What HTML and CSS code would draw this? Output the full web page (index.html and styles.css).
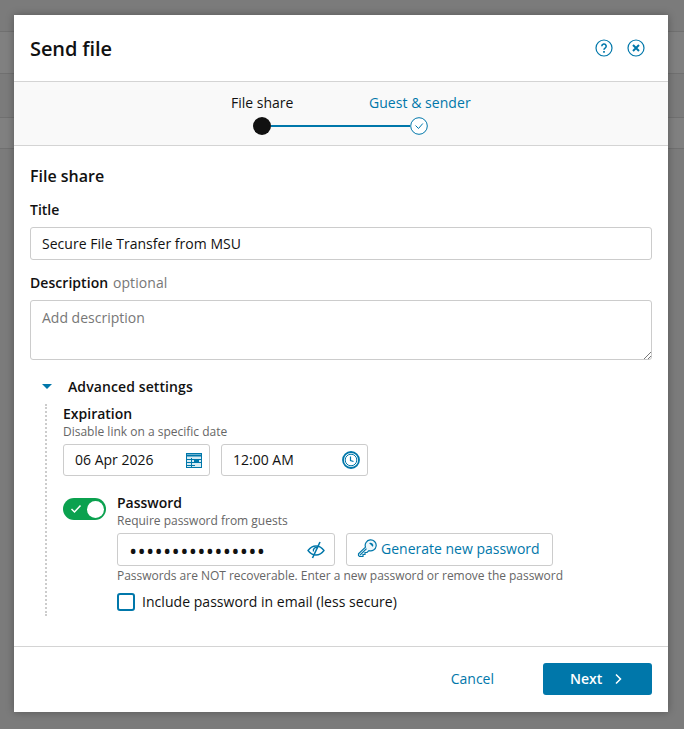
FILE: index.html
```html
<!DOCTYPE html>
<html lang="en">
<head>
    <meta charset="UTF-8">
    <title>Send file</title>
    <link rel="stylesheet" href="styles.css">
</head>
<body>
    <div class="backdrop-bars">
        <div class="bar"></div>
        <div class="bar"></div>
    </div>
    <div class="modal">
        <div class="modal-header">
            <h1>Send file</h1>
            <div class="header-icons">
                <svg width="18" height="18" viewBox="0 0 18 18" fill="none" stroke="#0077aa" stroke-width="1.2"><circle cx="9" cy="9" r="8"/><path d="M6.800 7.200a2.200 2.200 0 1 1 3.300 1.900c-.8.500-1.100.9-1.100 1.700" stroke-width="1.600"/><path d="M9 12v1.700" stroke-width="1.700"/></svg>
                <svg width="18" height="18" viewBox="0 0 18 18" fill="none" stroke="#0077aa" stroke-width="1.2"><circle cx="9" cy="9" r="8"/><path d="M6 6l6 6M12 6l-6 6" stroke-width="2"/></svg>
            </div>
        </div>
        <div class="stepper">
            <div class="step-labels">
                <span class="step-active">File share</span>
                <span class="step-next">Guest &amp; sender</span>
            </div>
            <div class="step-track">
                <span class="step-dot"></span>
                <span class="step-line"></span>
                <svg width="18" height="18" viewBox="0 0 18 18" fill="#fff" stroke="#0077aa" stroke-width="1"><circle cx="9" cy="9" r="8.300"/><path d="M5.500 8.500l3 3 4.300-5" fill="none"/></svg>
            </div>
        </div>
        <div class="modal-body">
            <h2>File share</h2>
            <label class="field-label">Title</label>
            <div class="input title-input">Secure File Transfer from MSU</div>
            <label class="field-label desc-label">Description <span class="optional">optional</span></label>
            <div class="input textarea">
                <span class="placeholder">Add description</span>
                <svg class="resize-grip" width="8" height="8" viewBox="0 0 8 8" stroke="#777" stroke-width="1"><path d="M1 8l7-7M5 8l3-3"/></svg>
            </div>
            <div class="advanced-head">
                <span class="caret"></span>
                <span class="advanced-title">Advanced settings</span>
            </div>
            <div class="advanced">
                <div class="setting-title">Expiration</div>
                <div class="setting-hint">Disable link on a specific date</div>
                <div class="date-row">
                    <div class="input date-input"><span class="input-text">06 Apr 2026</span>
                        <svg width="16" height="15" viewBox="0 0 16 15" fill="none" stroke="#0077aa"><rect x="0.500" y="0.500" width="15" height="14" fill="#d7ebf3"/><path d="M0.500 2.500h15" stroke-width="2"/><path d="M0 6.500h16M0 9.500h16M0 12.500h9M5.500 5v10"/><rect x="8" y="6" width="5" height="4" fill="#0077aa" stroke="none"/></svg>
                    </div>
                    <div class="input time-input"><span class="input-text">12:00 AM</span>
                        <svg width="18" height="18" viewBox="0 0 18 18" fill="none" stroke="#0077aa"><circle cx="9" cy="9" r="8" stroke-width="1.800"/><circle cx="9" cy="9" r="5.800" stroke-width="1"/><path d="M8.500 5.500V9.500l3 1" stroke-width="1.200"/></svg>
                    </div>
                </div>
                <div class="password-row">
                    <div class="toggle">
                        <svg width="12" height="10" viewBox="0 0 12 10" fill="none" stroke="#fff" stroke-width="1.500"><path d="M1.500 5l3 3 6-6.500"/></svg>
                        <span class="knob"></span>
                    </div>
                    <div class="password-col">
                        <div class="setting-title">Password</div>
                        <div class="setting-hint">Require password from guests</div>
                        <div class="pass-controls">
                            <div class="input pass-input">
                                <span class="dots">••••••••••••••••</span>
                                <svg width="18" height="18" viewBox="0 0 18 18" fill="none" stroke="#0077aa" stroke-width="1.300"><path d="M1 9.500c2.200-3 4.900-4.500 8-4.500s5.800 1.500 8 4.500c-2.200 3-4.900 4.500-8 4.500s-5.800-1.500-8-4.500z"/><path d="M6.500 10.500a3 3 0 0 1 4.500-3.500"/><path d="M5.500 17L13 1" stroke-width="1.600"/></svg>
                            </div>
                            <button class="gen-btn">
                                <svg width="20" height="20" viewBox="0 0 20 20" fill="none" stroke="#0077aa" stroke-width="1.200"><path d="M8.500 8.200a5.500 5.500 0 1 1 3.400 3.400L10 13.500H8v2H6v2H2.500L1.500 16.500v-1.800z" fill="#eef7fb"/><path d="M3 16.200l6.500-6.500"/><path d="M12 4a3 3 0 0 1 4 4z" fill="#0077aa" stroke="none"/></svg>
                                Generate new password
                            </button>
                        </div>
                        <div class="setting-hint pass-note">Passwords are NOT recoverable. Enter a new password or remove the password</div>
                        <label class="check-row"><span class="checkbox"></span>Include password in email (less secure)</label>
                    </div>
                </div>
            </div>
        </div>
        <div class="modal-footer">
            <a class="cancel">Cancel</a>
            <button class="next-btn">Next
                <svg width="9" height="12" viewBox="0 0 9 12" fill="none" stroke="#fff" stroke-width="1.500"><path d="M2 1.500l4.500 4.500-4.500 4.500"/></svg>
            </button>
        </div>
    </div>
</body>
</html>
```

FILE: styles.css
```css
* {
    box-sizing: border-box;
}

body {
    margin: 0;
    height: 729px;
    overflow: hidden;
    background-color: #7b7b7b;
    font-family: "Open Sans", sans-serif;
    color: #111;
    position: relative;
}

.backdrop-bars .bar {
    position: absolute;
    left: 0;
    right: 0;
    border-top: 1px solid #707070;
    border-bottom: 1px solid #707070;
    background-color: #808080;
}

.backdrop-bars .bar:first-child { top: 31px; height: 43px; }
.backdrop-bars .bar:last-child { top: 117px; height: 32px; }

.modal {
    position: absolute;
    left: 14px;
    top: 15px;
    width: 654px;
    height: 697px;
    background-color: #fff;
    box-shadow: 0 0 8px rgba(0, 0, 0, 0.3);
    display: flex;
    flex-direction: column;
}

.modal-header {
    height: 67px;
    padding: 0 16px;
    display: flex;
    justify-content: space-between;
    align-items: center;
    border-bottom: 1px solid #d4d4d4;
}

.modal-header h1 {
    margin: 0;
    font-size: 20px;
    font-weight: 600;
    letter-spacing: -0.1px;
}

.header-icons {
    display: flex;
    gap: 14px;
    padding-right: 7px;
}

.stepper {
    height: 64px;
    background-color: #f9f9f9;
    border-bottom: 1px solid #d4d4d4;
    padding-top: 11px;
}

.step-labels {
    display: flex;
    font-size: 14px;
    line-height: 19px;
    padding-left: 217px;
    gap: 75.500px;
}

.step-next {
    color: #0077aa;
    letter-spacing: 0.05px;
}

.step-track {
    display: flex;
    align-items: center;
    margin: 5px 0 0 239px;
}

.step-dot {
    width: 18px;
    height: 18px;
    border-radius: 50%;
    background-color: #111;
}

.step-line {
    width: 139px;
    height: 2px;
    background-color: #0077aa;
}

.modal-body {
    flex: 1;
    padding: 18px 16px 0;
}

.modal-body h2 {
    margin: 0 0 12px;
    font-size: 16px;
    line-height: 24px;
    font-weight: 600;
}

.field-label {
    display: block;
    font-size: 14px;
    line-height: 19px;
    font-weight: 600;
    margin-bottom: 8px;
}

.desc-label {
    margin-top: 13px;
    letter-spacing: 0.05px;
}

.optional {
    color: #777;
    font-weight: 400;
    margin-left: 1px;
    letter-spacing: 0.1px;
}

.input {
    border: 1px solid #ccc;
    border-radius: 3px;
    background-color: #fff;
    font-size: 14px;
}

.title-input {
    height: 33px;
    line-height: 31px;
    padding-left: 11px;
    letter-spacing: 0.03px;
}

.textarea {
    height: 60px;
    padding: 7px 11px;
    position: relative;
}

.placeholder {
    color: #777;
}

.resize-grip {
    position: absolute;
    right: 0;
    bottom: 0;
}

.advanced-head {
    display: flex;
    align-items: center;
    margin-top: 16px;
    height: 20px;
}

.caret {
    width: 0;
    height: 0;
    margin-left: 12px;
    border-left: 5px solid transparent;
    border-right: 5px solid transparent;
    border-top: 5px solid #0077aa;
}

.advanced-title {
    margin-left: 16px;
    font-size: 14px;
    font-weight: 600;
    letter-spacing: 0.1px;
}

.advanced {
    margin: 8px 0 0 15px;
    padding-left: 16px;
    border-left: 2px dotted #ccc;
    height: 212px;
}

.setting-title {
    font-size: 14px;
    line-height: 19px;
    font-weight: 600;
}

.setting-hint {
    font-size: 12px;
    line-height: 17px;
    color: #666;
}

.date-row {
    display: flex;
    gap: 11px;
    margin-top: 4px;
}

.date-input, .time-input, .pass-input {
    display: flex;
    align-items: center;
    justify-content: space-between;
    height: 32px;
    padding: 0 7px 0 11px;
}

.date-input, .time-input {
    width: 147px;
}

.input-text {
    margin-bottom: 2px;
}

.password-row {
    display: flex;
    margin-top: 17px;
}

.toggle {
    width: 43px;
    height: 22px;
    margin: 5px 11px 0 0;
    border-radius: 11px;
    background-color: #0ba14f;
    display: flex;
    align-items: center;
    justify-content: space-between;
    padding: 0 2px 0 7px;
}

.knob {
    width: 17px;
    height: 17px;
    border-radius: 50%;
    background-color: #fff;
}

.pass-controls {
    display: flex;
    gap: 11px;
    margin-top: 4px;
}

.pass-input {
    width: 218px;
    height: 33px;
    padding-right: 9px;
}

.dots {
    font-size: 22px;
    line-height: 20px;
    letter-spacing: 0.25px;
}

.gen-btn {
    display: flex;
    align-items: center;
    gap: 4px;
    height: 33px;
    width: 207px;
    padding: 0 10px 2px;
    border: 1px solid #ccc;
    border-radius: 3px;
    background-color: #fff;
    color: #0077aa;
    font-family: inherit;
    font-size: 14px;
}

.pass-note {
    margin-top: 1px;
    letter-spacing: -0.03px;
}

.check-row {
    display: flex;
    align-items: center;
    margin-top: 8px;
    font-size: 14px;
    letter-spacing: 0.04px;
}

.checkbox {
    width: 18px;
    height: 18px;
    margin-right: 7px;
    border: 2px solid #0077aa;
    border-radius: 3px;
}

.modal-footer {
    height: 66px;
    border-top: 1px solid #d4d4d4;
    display: flex;
    align-items: center;
    justify-content: flex-end;
    padding: 0 16px 2px;
}

.cancel {
    color: #0077aa;
    font-size: 14px;
    margin-right: 49px;
}

.next-btn {
    display: flex;
    align-items: center;
    justify-content: flex-start;
    gap: 12px;
    width: 109px;
    height: 32px;
    padding-left: 27px;
    border: none;
    border-radius: 3px;
    background-color: #0077aa;
    color: #fff;
    font-family: inherit;
    font-size: 14px;
    font-weight: 600;
}
```
